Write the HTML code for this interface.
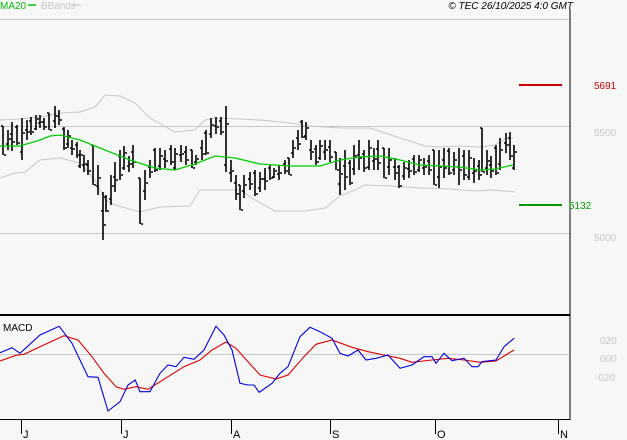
<!DOCTYPE html>
<html><head><meta charset="utf-8"><style>
html,body{margin:0;padding:0;background:#f7f7f7;}
svg{display:block;font-family:"Liberation Sans",sans-serif;}
</style></head><body>
<svg id="s" width="627" height="440" viewBox="0 0 627 440" xmlns="http://www.w3.org/2000/svg">
<rect width="627" height="440" fill="#f7f7f7"/>
<text x="0" y="9" font-size="10" fill="#00c000">MA20</text>
<line x1="28" y1="5" x2="36" y2="5" stroke="#00c000" stroke-width="1.5"/>
<text x="41" y="9" font-size="10" fill="#c8c8c8">BBands</text>
<line x1="73" y1="5" x2="81" y2="5" stroke="#c8c8c8"/>
<text x="573" y="9" font-size="10" font-style="italic" text-anchor="end" fill="#000">© TEC 26/10/2025 4:0 GMT</text>
<line x1="0" y1="19.5" x2="570" y2="19.5" stroke="#c8c8c8"/>
<line x1="0" y1="126.5" x2="570" y2="126.5" stroke="#c8c8c8"/>
<line x1="0" y1="233.5" x2="570" y2="233.5" stroke="#c8c8c8"/>
<line x1="570" y1="9" x2="570" y2="420" stroke="#000"/>
<line x1="0" y1="315" x2="570" y2="315" stroke="#000" stroke-width="2"/>
<line x1="0" y1="419.5" x2="570" y2="419.5" stroke="#000"/>
<line x1="0" y1="354.5" x2="570" y2="354.5" stroke="#c8c8c8"/>
<line x1="519" y1="85" x2="562" y2="85" stroke="#cc0000" stroke-width="2"/>
<text x="594" y="89" font-size="10" fill="#cc0000">5691</text>
<line x1="519" y1="205" x2="562" y2="205" stroke="#009900" stroke-width="2"/>
<text x="569" y="209" font-size="10" fill="#009900">5132</text>
<text x="594" y="136" font-size="10" fill="#c8c8c8">5500</text>
<text x="594" y="241" font-size="10" fill="#c8c8c8">5000</text>
<text x="600" y="344" font-size="10" fill="#c8c8c8">020</text>
<text x="600" y="362" font-size="10" fill="#c8c8c8">000</text>
<text x="595" y="381" font-size="10" fill="#c8c8c8">-020</text>
<text x="3" y="331" font-size="10" fill="#000">MACD</text>
<g id="g"></g>
<g stroke="#000">
<line x1="21.5" y1="420" x2="21.5" y2="434"/><line x1="121.5" y1="420" x2="121.5" y2="434"/>
<line x1="231.5" y1="420" x2="231.5" y2="434"/><line x1="330.5" y1="420" x2="330.5" y2="434"/>
<line x1="435.5" y1="420" x2="435.5" y2="434"/><line x1="558.5" y1="420" x2="558.5" y2="434"/>
</g>
<g font-size="11" fill="#000">
<text x="23" y="438">J</text><text x="123" y="438">J</text><text x="233" y="438">A</text>
<text x="332" y="438">S</text><text x="437" y="438">O</text><text x="560" y="438">N</text>
</g>
</svg>
<script>
var NS="http://www.w3.org/2000/svg",g=document.getElementById("g");
function pl(pts,col,w,fx,fy){var e=document.createElementNS(NS,"polyline");e.setAttribute("points",pts.map(function(p){return fx(p[0])+","+fy(p[1])}).join(" "));e.setAttribute("fill","none");e.setAttribute("stroke",col);e.setAttribute("stroke-width",w);g.appendChild(e);}
var id=function(v){return v};
pl([[0,120],[20,119],[40,117],[60,113],[80,112],[95,107],[105,95],[120,96],[135,103],[150,118],[175,132],[195,130],[205,120],[215,118],[240,119],[260,120],[290,123],[310,126],[340,128],[370,128],[400,138],[425,146],[440,147],[460,146],[480,147],[495,145],[505,139],[513,138]],"#c8c8c8",1,id,id);
pl([[0,178],[15,173],[25,172],[40,160],[60,158],[80,163],[95,180],[105,200],[115,205],[140,212],[160,207],[190,206],[200,190],[240,190],[255,200],[275,211],[305,211],[325,208],[340,196],[355,190],[365,185],[390,186],[420,188],[450,189],[475,191],[490,190],[505,191],[515,192]],"#c8c8c8",1,id,id);
var bars=[[3,126,155],[8,130,150],[12,122,151],[17,125,145],[22,118,160],[27,120,140],[31,117,135],[36,115,130],[40,115,128],[44,118,130],[49,113,130],[55,106,128],[59,110,125],[64,127,150],[68,130,148],[72,140,155],[77,142,158],[80,150,168],[84,155,172],[88,160,175],[93,145,185],[98,165,195],[103,192,240],[106,195,212],[111,175,205],[115,162,192],[120,150,180],[124,146,170],[129,156,172],[133,145,168],[140,178,224],[145,170,200],[150,160,178],[155,148,172],[160,148,170],[165,150,168],[171,145,165],[175,148,170],[181,145,162],[186,146,165],[192,150,168],[196,155,165],[202,140,160],[206,130,155],[211,118,138],[216,117,134],[221,117,135],[226,106,172],[231,160,182],[236,175,200],[240,185,210],[244,175,198],[250,172,190],[255,170,196],[260,172,192],[265,168,190],[270,165,180],[274,168,178],[279,165,180],[285,160,174],[289,158,175],[293,140,158],[298,130,150],[302,120,138],[306,122,140],[311,140,160],[316,145,165],[320,140,160],[325,140,160],[330,140,162],[336,152,170],[340,158,195],[345,150,190],[350,160,185],[354,145,175],[359,140,170],[364,150,172],[369,140,170],[374,148,170],[378,140,170],[384,148,178],[389,148,175],[395,158,180],[399,165,188],[404,162,180],[409,160,178],[414,155,175],[419,155,172],[424,158,175],[429,155,175],[434,150,185],[439,150,188],[444,148,178],[449,148,175],[454,152,175],[459,148,185],[464,150,180],[469,150,180],[474,158,183],[479,160,180],[482,128,172],[487,150,175],[491,156,178],[496,145,175],[500,138,170],[506,133,153],[510,132,160],[514,145,170]];
var d="";bars.forEach(function(b,i){var x=b[0],r=((i*37)%10)/10,o=b[1]+(b[2]-b[1])*r,c=b[1]+(b[2]-b[1])*(1-r*0.8);
d+="M"+x+" "+b[1]+"V"+b[2]+"M"+(x-2)+" "+o.toFixed(0)+"H"+x+"M"+(x+1)+" "+c.toFixed(0)+"H"+(x+3);});
var p=document.createElementNS(NS,"path");p.setAttribute("d",d);p.setAttribute("stroke","#000");p.setAttribute("stroke-width","1.6");p.setAttribute("fill","none");g.appendChild(p);
pl([[0,146],[20,146],[40,140],[50,136],[60,135],[80,140],[100,148],[130,160],[155,168],[175,170],[195,164],[215,156],[235,158],[260,164],[290,166],[320,166],[340,160],[360,157],[380,156],[400,160],[420,165],[440,166],[460,167],[480,170],[495,169],[513,165]],"#00cc00",1.3,id,id);
var fx=function(v){return (v/2.5).toFixed(1)},fy=function(v){return (250+v/3).toFixed(1)};
pl([[0,333],[40,316],[60,313],[100,290],[160,257],[195,270],[230,320],[260,370],[290,410],[310,418],[340,410],[370,418],[420,380],[460,350],[500,330],[530,300],[565,276],[590,295],[620,335],[650,375],[690,387],[720,375],[760,320],[790,283],[830,270],[880,292],[920,305],[960,315],[1000,325],[1030,337],[1080,330],[1120,325],[1160,330],[1200,337],[1240,333],[1285,300]],"#dd0000",1.1,fx,fy);
pl([[0,308],[30,293],[50,310],[100,255],[148,229],[180,280],[220,380],[245,382],[270,483],[300,455],[320,405],[338,390],[350,425],[375,425],[400,370],[420,345],[440,350],[460,322],[485,328],[510,300],[540,229],[560,255],[580,300],[600,400],[620,405],[635,405],[648,427],[680,400],[700,370],[720,350],[750,260],[775,232],[800,245],[830,265],[850,310],[870,318],[895,300],[915,330],[940,325],[970,315],[1000,355],[1030,345],[1060,320],[1080,320],[1090,340],[1110,310],[1130,332],[1160,325],[1180,350],[1195,350],[1205,335],[1240,330],[1260,290],[1285,265]],"#0000dd",1.1,fx,fy);
</script>
</body></html>
